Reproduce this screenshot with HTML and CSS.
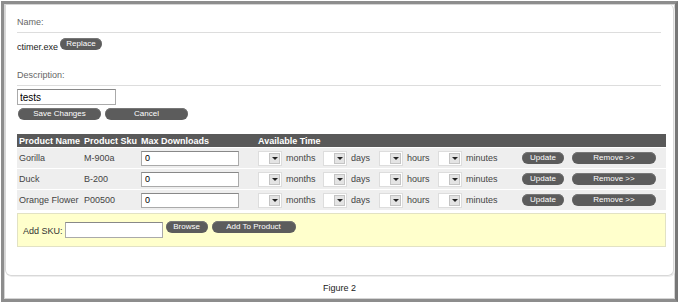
FILE: index.html
```html
<!doctype html>
<html>
<head>
<meta charset='utf-8' />
<title>Figure 2</title>
<link rel="stylesheet" href="styles.css">
</head>
<body>
<div class="frame">
	<div class="panel">
		<div class="head first">Name:</div>
		<div class="file">
			<span class="fname">ctimer.exe</span>
			<a class="btn replace" href="javascript:;">Replace</a>
		</div>
		<div class="head second">Description:</div>
		<input class="desc" type="text" value="tests" />
		<div class="actions">
			<a class="btn wide" href="javascript:;">Save Changes</a>
			<a class="btn wide" href="javascript:;">Cancel</a>
		</div>

		<div class="grid">
			<div class="row top">
				<span class="c-name">Product Name</span>
				<span class="c-sku">Product Sku</span>
				<span class="c-max">Max Downloads</span>
				<span>Available Time</span>
			</div>
		</div>

		<div class="addbox">
			<span class="addlbl">Add SKU:</span>
			<input class="sku" type="text" value="" />
			<a class="btn browse" href="javascript:;">Browse</a>
			<a class="btn addbtn" href="javascript:;">Add To Product</a>
		</div>
	</div>
	<div class="caption">Figure 2</div>
</div>

<script type="text/javascript">
	var grid=document.getElementsByClassName('grid')[0];
	var items=[['Gorilla','M-900a'],['Duck','B-200'],['Orange Flower','P00500']];
	var units=[['months','u1'],['days','u2'],['hours','u3'],['minutes','u4']];
	var str='';
	for(var i=0;i<items.length;i++){
		str+='<div class="row"><span class="c-name">'+items[i][0]+'</span><span class="c-sku">'+items[i][1]+'</span>';
		str+='<span class="c-max"><input class="max" type="text" value="0" /></span>';
		for(var j=0;j<units.length;j++){
			str+='<span class="unit '+units[j][1]+'"><span class="sel"><span class="arr"></span></span>'+units[j][0]+'</span>';
		}
		str+='<a class="btn upd" href="javascript:;">Update</a><a class="btn rem" href="javascript:;">Remove &gt;&gt;</a></div>';
	}
	grid.innerHTML+=str;
</script>
</body>
</html>
```

FILE: styles.css
```css
*{margin: 0;padding: 0;box-sizing: border-box;}
body{background: #fff;font-family: "Liberation Sans", Arial, sans-serif;font-size: 9px;color: #222;}
.frame{margin: 1px;width: 677px;height: 301px;border: 3px solid #8d8d8d;border-right-color: #777;
	box-shadow: inset 0 0 0 1px #d4d4d4;background: #fff;padding: 0 1px;}
.panel{height: 272px;border: 1px solid #d8d8d8;border-top: none;border-radius: 0 6px 6px 6px;
	padding: 0 10px 0 11px;box-shadow: 1px 1px 0 #eee;}
.head{color: #666;line-height: 14px;padding-bottom: 3px;border-bottom: 1px solid #ddd;margin-right: 2px;}
.head.first{padding-top: 11px;}
.head.second{margin-top: 14px;}
.file{display: flex;align-items: flex-start;margin-top: 5px;height: 16px;}
.fname{padding-top: 3px;line-height: 13px;margin-right: 2px;}
.btn{display: inline-block;height: 12px;line-height: 12px;border-radius: 7px;background: #5c5c5c;color: #fff;
	font-size: 8px;text-align: center;text-decoration: none;box-shadow: inset 0 1px 0 #777;}
.replace{width: 42px;}
.desc{display: block;margin-top: 3px;width: 99px;height: 16px;border: 1px solid #aaa;border-top-color: #888;
	font: 10px "Liberation Sans", Arial, sans-serif;padding-left: 2px;outline: none;}
.actions{display: flex;gap: 4px;margin-top: 3px;padding-left: 1px;}
.wide{width: 83px;}
.grid{margin-top: 14px;margin-right: -3px;}
.row{display: flex;align-items: center;height: 21px;background: #eee;border-top: 1px solid #fff;color: #444;}
.row.top{height: 13px;border-top: none;background: #595959;color: #fff;font-weight: bold;}
.c-name{width: 67px;padding-left: 2px;white-space: nowrap;}
.c-sku{width: 57px;white-space: nowrap;}
.c-max{width: 117px;}
.max{display: block;width: 98px;height: 15px;border: 1px solid #aaa;border-top-color: #888;padding-left: 3px;
	font: 9px "Liberation Sans", Arial, sans-serif;outline: none;}
.unit{display: flex;align-items: center;gap: 4px;}
.u1{width: 65px;}
.u2{width: 56px;}
.u3{width: 59px;}
.u4{width: 84px;}
.sel{display: flex;justify-content: flex-end;align-items: center;width: 24px;height: 15px;background: #fff;
	border: 1px solid #ddd;padding-right: 1px;}
.arr{position: relative;width: 11px;height: 11px;background: #e4e4e4;border: 1px solid #c4c4c4;}
.arr:after{content: '';position: absolute;left: 2px;top: 3px;border: 3px solid transparent;border-top: 3px solid #222;border-bottom: none;}
.upd{width: 42px;}
.rem{width: 84px;margin-left: 8px;}
.addbox{display: flex;align-items: center;margin-top: 3px;margin-right: -3px;height: 34px;background: #ffffcc;
	border: 1px solid #e2e2c4;padding-left: 5px;}
.addlbl{margin-right: 2px;color: #333;padding-top: 1px;}
.sku{width: 98px;height: 16px;border: 1px solid #aaa;border-top-color: #888;outline: none;margin-right: 3px;}
.browse{width: 42px;margin-top: -6px;margin-right: 4px;}
.addbtn{width: 84px;margin-top: -6px;}
.caption{text-align: center;padding-top: 7px;color: #222;}
```
